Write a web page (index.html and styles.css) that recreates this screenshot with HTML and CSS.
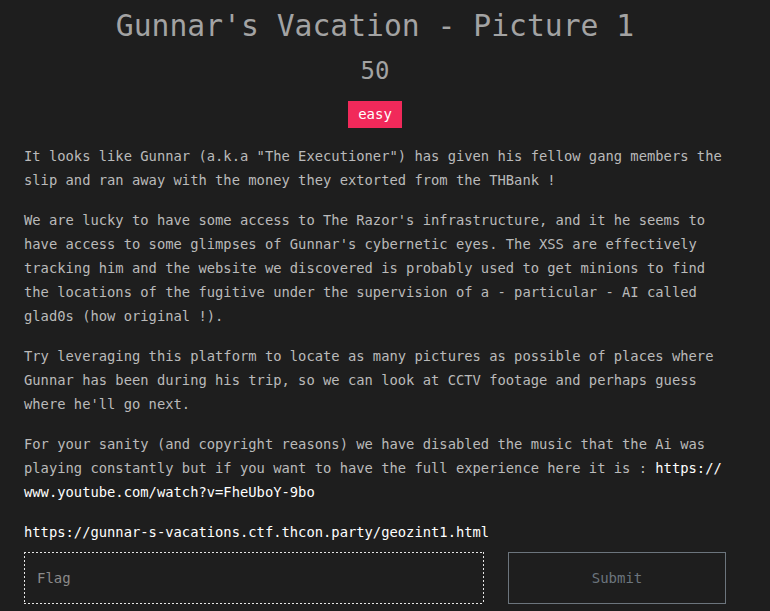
FILE: index.html
```html
<!DOCTYPE html>
<html lang="en">
<head>
<meta charset="utf-8">
<title>Gunnar's Vacation - Picture 1</title>
<link rel="stylesheet" href="styles.css">
</head>
<body>
<div class="challenge">
  <h1 class="title">Gunnar's Vacation - Picture 1</h1>
  <div class="points">50</div>
  <div class="tags"><span class="badge">easy</span></div>
  <div class="description">
    <p>It looks like Gunnar (a.k.a "The Executioner") has given his fellow gang members the slip and ran away with the money they extorted from the THBank !</p>
    <p>We are lucky to have some access to The Razor's infrastructure, and it he seems to have access to some glimpses of Gunnar's cybernetic eyes. The XSS are effectively tracking him and the website we discovered is probably used to get minions to find the locations of the fugitive under the supervision of a - particular - AI called glad0s (how original !).</p>
    <p>Try leveraging this platform to locate as many pictures as possible of places where Gunnar has been during his trip, so we can look at CCTV footage and perhaps guess where he'll go next.</p>
    <p>For your sanity (and copyright reasons) we have disabled the music that the Ai was playing constantly but if you want to have the full experience here it is : <a class="link" href="#">https://<wbr>www.youtube.com/watch?v=FheUboY-9bo</a></p>
  </div>
  <div class="url">https://gunnar-s-vacations.ctf.thcon.party/geozint1.html</div>
  <form class="submit-row">
    <input class="flag-input" type="text" placeholder="Flag">
    <button class="submit-btn" type="button">Submit</button>
  </form>
</div>
</body>
</html>
```
FILE: styles.css
```css
html, body {
  background: #1e1e1e;
}
body {
  margin: 8px;
  font-family: "DejaVu Sans Mono", "Liberation Mono", monospace;
  color: #bababa;
}
.challenge {
  width: 702px;
  margin-left: 16px;
  display: flex;
  flex-direction: column;
}
.title {
  margin: 0;
  font-weight: normal;
  font-size: 29.7px;
  line-height: 36px;
  color: #a3a3a3;
  text-align: center;
}
.points {
  margin-top: 12px;
  font-size: 24px;
  line-height: 30px;
  color: #a3a3a3;
  text-align: center;
}
.tags {
  margin-top: 15px;
  display: flex;
  justify-content: center;
}
.badge {
  background: #f1295a;
  color: #ffffff;
  font-size: 14px;
  line-height: 19px;
  padding: 4px 10px;
}
.description {
  margin-top: 16px;
  font-size: 13.8px;
  line-height: 24px;
}
.description p {
  margin: 0 0 16px;
}
.link {
  color: #ffffff;
  text-decoration: none;
}
.url {
  font-size: 13.8px;
  line-height: 24px;
  color: #ffffff;
}
.submit-row {
  margin: 8px 0 0;
  display: flex;
  gap: 24px;
}
.flag-input {
  box-sizing: border-box;
  width: 460px;
  height: 52px;
  border: none;
  background:
    repeating-linear-gradient(90deg, #e6e6e6 0 2px, transparent 2px 4px) top left / 100% 1px no-repeat,
    repeating-linear-gradient(90deg, #e6e6e6 0 2px, transparent 2px 4px) bottom left / 100% 1px no-repeat,
    repeating-linear-gradient(180deg, #e6e6e6 0 2px, transparent 2px 4px) top left / 1px 100% no-repeat,
    repeating-linear-gradient(180deg, #e6e6e6 0 2px, transparent 2px 4px) top right / 1px 100% no-repeat,
    transparent;
  padding: 0 13px;
  font-family: "DejaVu Sans Mono", "Liberation Mono", monospace;
  font-size: 14px;
  color: #cfcfcf;
  outline: none;
}
.flag-input::placeholder {
  color: #8a8a8a;
}
.submit-btn {
  box-sizing: border-box;
  width: 218px;
  height: 52px;
  background: transparent;
  border: 1px solid #6c757d;
  color: #6c757d;
  font-family: "DejaVu Sans Mono", "Liberation Mono", monospace;
  font-size: 14px;
}
```
